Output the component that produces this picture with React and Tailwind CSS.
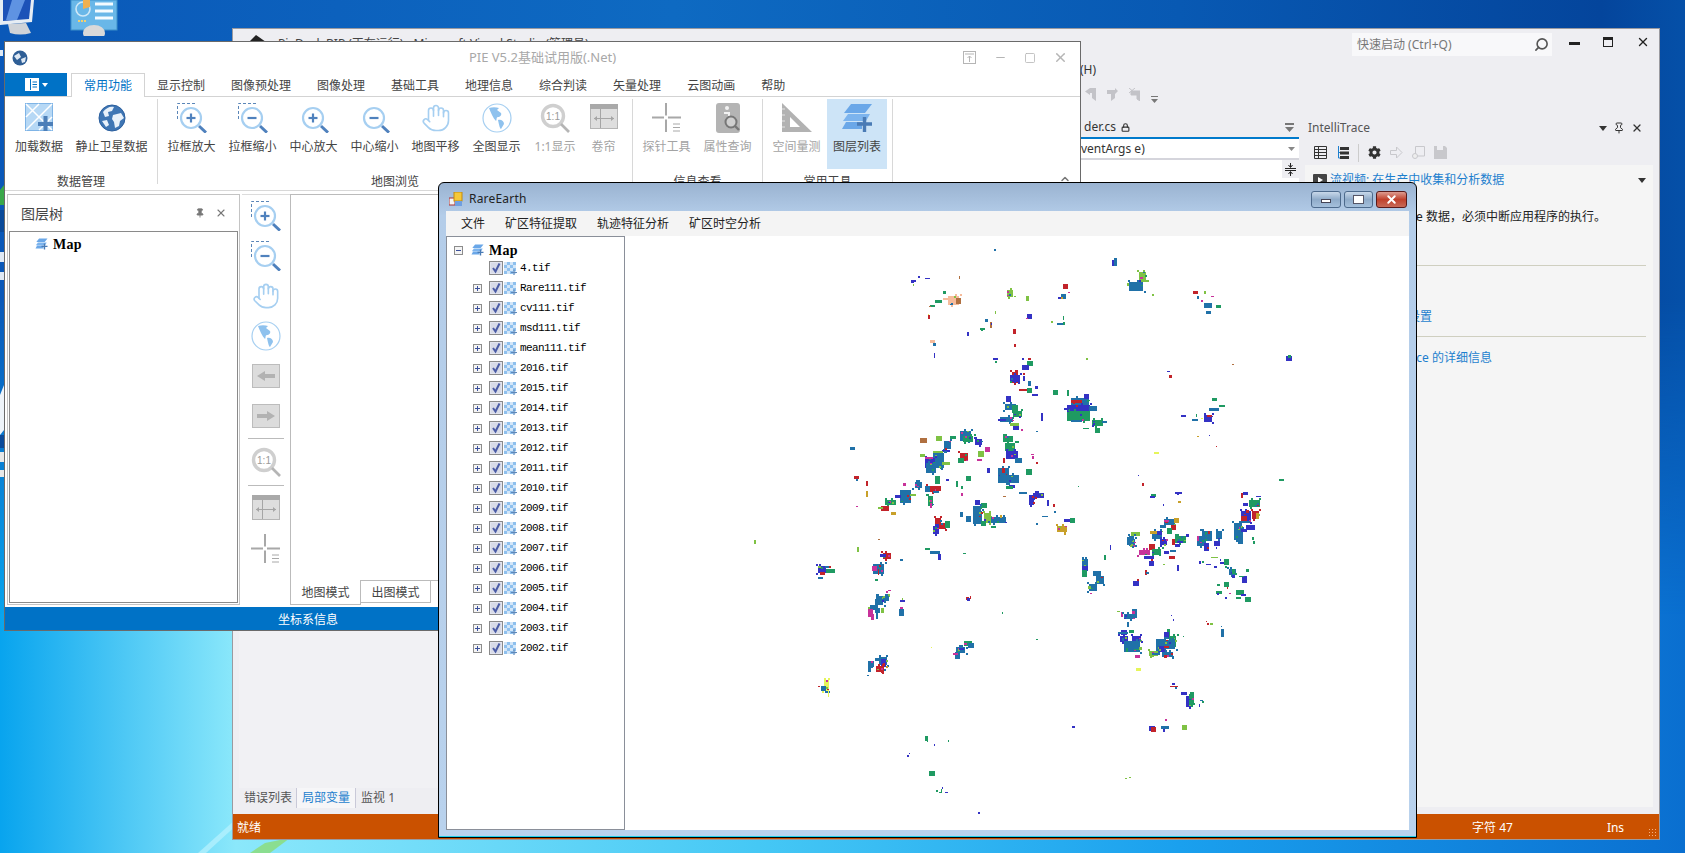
import React from 'react';
import { Hand, Search, X, Minus, Square, ChevronUp, Lock, Pin } from 'lucide-react';
import { FaCog } from 'react-icons/fa';

const CJK = "font-['Noto_Sans','Noto_Sans_CJK_SC',sans-serif]";

// map raster, traced from the picture as "colour x y w h" at 3x
const COLORS = {
  b: '#2071a8', i: '#3432c4', g: '#1f9a62', r: '#c2232a', m: '#c8329a',
  l: '#7fc244', y: '#c8a02a', p: '#f6bc9c', n: '#b07040', v: '#e6f55a',
};

const ZOOM_A = `b 432 57 6 6,i 785 90 12 15,b 790 85 8 20,l 865 128 18 25,l 830 160 12 8,b 835 158 38 22,m 868 142 8 4,l 885 150 8 6,l 903 192 4 6,
r 1026 184 10 8,l 1060 184 6 8,b 1040 200 6 8,b 1060 220 20 12,b 1065 244 10 8,g 1097 225 10 8,m 1052 212 6 6,m 1080 198 8 3,
i 183 150 8 8,i 205 138 5 5,i 225 144 10 3,i 192 150 5 4,n 327 140 3 8,l 190 162 3 4,g 280 184 8 8,p 295 198 30 22,n 318 205 10 14,p 280 205 15 6,g 255 210 18 8,g 240 225 10 4,n 238 230 6 3,r 236 255 6 9,v 236 252 3 3,
l 472 182 14 18,l 525 200 8 10,l 492 200 4 3,l 435 243 3 8,r 638 162 12 12,b 630 192 12 12,i 622 202 8 6,y 630 202 6 6,m 652 188 5 3,i 530 254 12 12,m 525 264 6 3,
b 405 267 8 8,n 422 278 6 14,i 424 280 3 6,g 390 295 12 4,g 395 299 4 6,i 353 306 6 9,l 600 273 6 6,g 636 258 3 9,b 618 280 20 6,g 636 278 6 8,r 490 298 8 10,r 492 342 6 8,p 240 330 12 8,b 250 340 8 8,i 252 370 3 10,
i 430 384 10 6,g 437 394 6 6,i 514 384 6 6,r 533 384 8 6,g 530 394 14 10,i 514 405 16 10,r 488 426 10 30,i 480 435 22 18,r 518 430 6 6,i 518 438 4 12,b 533 455 8 12,i 552 470 8 8,r 505 478 30 5,g 530 476 10 10,i 545 492 14 6,g 608 480 10 10,g 650 480 6 15,l 706 384 6 6,
b 660 505 50 20,i 650 525 65 22,g 650 545 65 25,r 660 512 30 8,i 700 492 10 12,b 715 530 20 12,i 640 535 10 5,b 660 570 30 6,g 725 570 30 15,g 732 595 12 10,g 697 594 14 3,b 755 575 10 6,
i 470 498 12 14,b 466 522 30 14,g 488 525 12 20,g 490 545 20 15,b 450 562 35 12,i 445 568 20 6,i 570 550 6 20,i 490 580 12 18,l 480 580 20 8,m 510 598 6 6,b 555 605 6 3,
b 330 605 30 25,g 340 620 25 15,i 375 628 18 14,n 210 625 18 10,l 258 620 14 10,g 300 618 15 8,b 282 635 16 20,i 278 660 20 6,l 250 664 25 6,b 250 670 28 40,i 225 685 25 25,m 225 683 20 6,b 228 700 25 25,l 276 696 20 8,l 210 672 12 8,r 330 670 20 20,g 325 685 15 10,l 385 665 15 15,m 405 652 12 12,m 382 688 10 5,
g 460 620 25 15,g 465 640 25 20,i 470 665 30 20,b 495 685 15 10,r 460 685 6 10,i 412 715 8 10,b 445 715 30 40,b 450 735 50 20,r 458 714 8 10,i 478 765 15 8,g 470 770 18 8,g 525 718 15 14,m 540 672 8 3,r 555 696 6 6,m 545 680 4 8,
b 0 652 12 8,r 12 738 10 8,b 20 748 6 4,r 48 755 6 12,y 48 785 6 14,m 20 828 6 3,b 195 758 18 14,m 160 760 8 8,b 150 780 30 35,i 135 795 15 8,g 105 810 30 10,r 95 830 20 12,l 85 832 10 6,y 125 848 10 8,l 180 792 15 6,r 230 768 25 15,b 225 770 10 15,g 255 740 12 20,r 260 770 12 12,b 250 785 14 6,g 235 800 10 25,m 240 820 6 10,i 288 748 8 5,g 318 755 4 15,g 350 740 10 12,g 335 770 6 8,m 335 790 6 8,
i 375 810 10 10,g 395 820 15 12,b 370 830 20 50,b 350 860 10 15,b 380 845 15 20,l 402 850 18 25,b 425 862 40 14,g 395 875 10 10,g 425 890 10 5,y 450 855 6 8,b 330 848 8 10,r 255 865 15 25,r 265 880 20 15,i 250 890 15 18,g 285 875 10 18,
b 505 786 20 5,i 535 795 10 25,i 550 790 25 12,i 590 810 6 15,r 608 822 6 8,b 610 845 6 6,b 575 860 14 3,i 640 868 15 8,g 658 865 10 10,y 620 888 25 15,b 555 880 6 6,n 460 798 8 3,
l 22 948 6 12,n 85 925 6 3,r 100 968 20 14,i 90 970 15 8,b 150 985 8 5,b 70 1000 30 25,m 68 1005 10 10,r 85 1015 3 15,g 75 1045 8 5,g 225 952 10 5,b 240 962 25 8,i 265 970 8 14,g 340 968 8 3,
i 1305 378 14 12,g 1312 375 8 8,n 1143 402 6 3,i 950 424 8 3,r 955 436 8 8,g 1085 505 10 8,g 1105 525 14 5,b 1075 535 25 8,i 1060 555 20 18,r 1068 555 12 6,i 990 555 10 6,b 1025 568 14 4,g 1035 552 3 8,v 1050 565 5 3,y 1038 618 6 3,i 1075 615 3 3,r 1095 648 3 3,v 910 668 10 4,i 862 735 3 3,r 873 760 3 8,g 1285 747 10 6,g 683 768 3 3`;

const ZOOM_B = `r 423 10 5 8,g 452 42 12 8,i 447 50 12 6,i 522 38 18 5,i 528 38 5 8,y 533 63 8 6,i 487 72 3 6,
b 490 118 30 14,r 510 135 12 10,b 478 135 15 8,g 500 145 12 10,y 520 116 10 10,b 455 155 25 18,y 448 155 20 6,i 470 155 10 8,m 490 120 10 6,g 522 165 28 18,r 515 175 8 15,i 530 180 15 6,i 555 160 8 8,i 478 175 18 15,i 522 190 10 8,
l 390 158 22 7,b 385 165 10 25,b 378 175 20 15,m 400 185 6 3,r 445 190 14 15,m 415 208 30 12,g 455 205 22 14,i 430 225 25 8,i 445 240 12 10,r 450 235 6 5,i 490 210 12 8,b 507 208 15 4,r 505 225 15 8,l 487 250 5 3,i 530 252 5 15,
b 605 155 25 22,b 590 165 22 25,m 590 165 6 12,i 610 188 10 20,b 645 155 15 18,i 640 180 15 10,r 618 200 6 6,i 645 200 3 6,
r 720 40 6 12,i 726 38 10 8,i 765 48 12 3,g 745 60 30 18,i 728 70 12 8,i 720 95 25 30,r 735 90 8 8,r 720 110 15 15,r 755 95 18 20,y 765 100 8 14,b 715 125 30 6,b 700 130 20 20,b 700 148 22 25,b 712 175 10 10,i 735 135 22 10,i 720 148 14 8,g 755 168 6 8,g 758 180 6 8,
b 245 235 15 20,i 245 255 15 10,g 245 268 10 18,b 278 272 20 10,b 285 285 20 20,b 265 310 20 16,l 262 315 8 8,m 268 336 6 3,i 396 302 15 12,r 410 295 6 6,r 432 268 4 10,b 436 275 8 6,g 310 222 6 10,i 327 192 3 10,
l 630 230 18 3,i 595 242 6 8,g 605 240 6 4,i 615 250 12 3,i 657 235 3 6,i 657 243 10 6,g 670 235 10 15,g 672 255 6 6,i 640 255 8 6,b 685 265 18 15,g 693 265 8 10,g 735 265 8 8,i 695 282 8 8,i 725 285 10 18,g 715 285 12 3,g 650 310 8 6,g 670 305 10 12,r 680 318 3 6,g 645 330 14 8,i 650 338 6 6,g 705 328 20 12,i 720 340 12 6,g 732 348 14 12,i 672 350 6 6,g 705 350 10 6,m 685 336 6 3,
l 350 390 8 3,m 360 395 6 12,b 370 400 25 12,b 395 385 10 22,m 393 392 8 8,b 378 425 6 10,i 360 447 15 12,g 385 447 10 8,b 352 455 25 4,i 358 465 20 15,i 395 465 22 12,b 370 480 45 30,g 400 505 15 3,l 415 500 8 8,m 402 522 10 8,v 405 562 10 8,
g 500 445 8 25,i 490 455 12 14,g 505 465 17 30,b 465 475 25 35,i 475 495 15 14,b 490 478 30 22,r 490 497 10 6,l 445 510 22 12,b 455 518 20 5,b 485 515 28 12,r 490 522 8 8,b 510 525 8 3,
i 513 606 8 6,r 507 615 20 3,b 522 618 6 6,i 540 635 15 8,i 555 645 12 28,g 565 640 10 30,g 575 668 8 6,b 598 657 8 3,g 605 660 4 6,i 594 670 3 8,
i 213 735 8 6,i 445 735 15 12,r 452 740 12 12,b 480 735 20 8,i 487 745 6 8,m 492 714 6 6,l 543 732 10 10,l 372 893 6 3,l 385 890 6 3,g 6 393 3 6,g 105 474 6 3,i 510 402 3 3,i 518 414 3 6,g 548 465 3 3,r 615 420 3 3,r 618 426 6 6,l 628 426 8 6,b 660 435 3 3,b 660 445 8 20`;

const ZOOM_C = `l 192 117 6 9,i 384 195 20 18,l 384 195 8 6,b 405 195 12 5,r 417 195 6 6,g 410 204 22 9,r 390 213 12 8,b 384 228 10 6,r 384 555 6 3,v 402 537 10 30,b 393 555 12 10,b 405 570 10 6,v 414 570 3 15,
m 595 268 8 3,m 590 270 6 6,l 585 280 10 8,b 560 285 35 12,b 555 295 20 15,b 560 280 8 8,b 540 312 20 10,b 555 322 12 10,m 535 325 10 20,m 545 340 8 14,b 560 338 6 14,l 573 323 8 10,l 535 318 6 6,i 630 298 12 5,l 636 291 3 6,b 627 325 12 18,m 630 320 8 4,
r 828 288 8 8,i 833 292 8 8,r 840 285 3 8,g 936 333 3 6,g 822 420 20 10,m 822 428 8 6,b 835 428 14 10,b 798 440 22 15,b 797 455 12 16,m 790 457 10 5,i 808 442 10 6,b 828 440 6 6,
b 534 480 15 15,b 540 495 8 6,b 534 500 8 12,b 555 472 12 8,b 567 468 20 20,i 575 475 12 20,r 560 495 20 15,r 580 488 6 8,y 588 495 6 6,b 533 522 6 3,b 582 505 6 6,m 545 480 6 5,v 723 438 3 3,
g 705 705 8 12,g 711 715 3 8,i 732 729 3 6,g 774 717 3 6,i 651 762 6 6,i 657 758 3 3,g 717 812 15 10,g 738 867 6 6,g 747 873 8 3,g 753 865 3 8,i 756 858 3 6,i 765 873 8 3,i 865 933 6 6`;

function buildRaster() {
  let seed = 7331;
  const rnd = (n) => {
    seed = (seed * 1103515245 + 12345) & 0x7fffffff;
    return (seed >> 8) % n;
  };
  const out = [];
  const keys = 'biglmr';
  const add = (str, ox, oy) => {
    str.split(',').forEach((e) => {
      const [c, x, y, w, h] = e.trim().split(' ');
      const sx = Math.floor(ox + x / 3), sy = Math.floor(oy + y / 3);
      const sw = Math.ceil(w / 3) + (w >= 9 ? 1 : 0), sh = Math.ceil(h / 3) + (h >= 9 ? 1 : 0);
      out.push([COLORS[c], sx, sy, sw, sh]);
      // break big blobs up so they read as raster cells
      if (w * h >= 250) {
        for (let k = 0; k < 3; k++) {
          const px = sx + rnd(sw);
          const py = sy + rnd(sh);
          const pick = COLORS[keys[rnd(6)]];
          out.push([pick, px, py, 2, k % 2 ? 1 : 2]);
        }
        for (let k = 0; k < 3; k++) {
          out.push([COLORS[c], sx - 2 + rnd(sw + 4), sy - 2 + (k % 2 ? sh + 2 : 0), 2, 2]);
        }
      }
    });
  };
  add(ZOOM_A, 850, 230);
  add(ZOOM_B, 1000, 480);
  add(ZOOM_C, 690, 500);
  return out;
}
const RASTER = buildRaster();

const FILE_ROWS = ['4.tif', 'Rare111.tif', 'cv111.tif', 'msd111.tif', 'mean111.tif', '2016.tif', '2015.tif', '2014.tif', '2013.tif', '2012.tif', '2011.tif', '2010.tif', '2009.tif', '2008.tif', '2007.tif', '2006.tif', '2005.tif', '2004.tif', '2003.tif', '2002.tif'];
const RIBBON_TABS = ['显示控制', '图像预处理', '图像处理', '基础工具', '地理信息', '综合判读', '矢量处理', '云图动画', '帮助'];

// ---- icons ----
const ZoomIcon = ({ sign, dashed }) => (
  <svg width="30" height="30" viewBox="0 0 30 30">
    {dashed && <path d="M0.5 16V0.5H20" fill="none" stroke="#5b86b8" strokeDasharray="3 2" />}
    <circle cx="14" cy="15" r="10" fill="#fff" stroke="#a6cff1" strokeWidth="2.2" />
    <path d="M9.5 15H18.5" stroke="#4f81bd" strokeWidth="2.2" />
    {sign === '+' && <path d="M14 10.5V19.5" stroke="#4f81bd" strokeWidth="2.2" />}
    <path d="M22 23L29 29.5" stroke="#4f81bd" strokeWidth="3" />
  </svg>
);

const PaleGlobe = () => (
  <svg width="30" height="30" viewBox="0 0 30 30">
    <circle cx="15" cy="15" r="14" fill="#fff" stroke="#a6cff1" strokeWidth="1.2" />
    <path d="M7 5C10 4 14 4 17 5L15 7L19 10C20 12 18 14 16 14C14 14 15 17 14 18C11 15 9 10 7 5Z" fill="#8fc2ee" />
    <path d="M16 17C19 16 22 18 22 21L19 26C18 26 17 22 16 17Z" fill="#8fc2ee" />
  </svg>
);

const DarkGlobe = () => (
  <svg width="28" height="28" viewBox="0 0 28 28">
    <circle cx="14" cy="14" r="13" fill="#3f76b4" />
    <path d="M5 8C8 4 12 2 16 3L14 7L10 8L11 12L7 13Z" fill="#e8f1fa" />
    <path d="M15 11L23 9L26 14L22 17L21 22L17 24L16 18L14 15Z" fill="#e8f1fa" />
    <path d="M4 17L9 16L11 21L8 23Z" fill="#e8f1fa" />
    <circle cx="14" cy="14" r="13" fill="none" stroke="#2b5f9e" />
  </svg>
);

const LoadData = () => (
  <svg width="29" height="30" viewBox="0 0 29 30">
    <rect x="0.5" y="0.5" width="27" height="27" fill="#b6d8f5" stroke="#7fb4e6" />
    <path d="M1 1L27 27M27 1L1 27M1 14L14 1M14 27L27 14" stroke="#fff" strokeWidth="1.5" />
    <path d="M13 21H28M20.5 13V28" stroke="#4d7fb8" strokeWidth="4" />
  </svg>
);

const OneToOne = ({ size = 30 }) => (
  <svg width={size} height={size} viewBox="0 0 30 30">
    <circle cx="13" cy="13" r="10.5" fill="#fff" stroke="#cfcfcf" strokeWidth="3.4" />
    <text x="13" y="17" textAnchor="middle" fontSize="10" fill="#9a9a9a" fontFamily="Liberation Sans">1:1</text>
    <path d="M21 21L29 29" stroke="#b5b5b5" strokeWidth="2.6" />
  </svg>
);

const Curtain = () => (
  <svg width="28" height="28" viewBox="0 0 28 28">
    <rect x="0.5" y="0.5" width="27" height="24" fill="#dedede" stroke="#b5b5b5" />
    <rect x="0" y="0" width="28" height="5" fill="#a9a9a9" />
    <path d="M10.5 5V24M4 14.5H24" stroke="#a5a5a5" />
    <path d="M4 14.5L7 12V17ZM24 14.5L21 12V17Z" fill="#a5a5a5" />
  </svg>
);

const Probe = () => (
  <svg width="30" height="30" viewBox="0 0 30 30">
    <path d="M14 0V29M0 14.5H29" stroke="#a8a8a8" strokeWidth="2" />
    <path d="M12 12.5H16V16.5H12Z" fill="#fff" />
    <path d="M21 21H28M21 24.5H28M21 28H28" stroke="#a8a8a8" />
  </svg>
);

const AttrQuery = () => (
  <svg width="24" height="30" viewBox="0 0 24 30">
    <rect width="24" height="30" rx="3" fill="#b4b4b4" />
    <circle cx="11" cy="5" r="2" fill="#f2f2f2" />
    <path d="M8 10H13V13" fill="none" stroke="#f2f2f2" strokeWidth="2" />
    <circle cx="15" cy="19" r="5.5" fill="#cfcfcf" stroke="#777" strokeWidth="2" />
    <path d="M19 23L23 27" stroke="#777" strokeWidth="2.4" />
  </svg>
);

const RulerTri = () => (
  <svg width="30" height="30" viewBox="0 0 30 30">
    <path d="M0 0L30 29H0Z" fill="#b2b2b2" />
    <path d="M8 14L18 24H8Z" fill="#fff" />
    <path d="M0 6H3M0 12H3M0 18H3M0 24H3" stroke="#e4e4e4" />
  </svg>
);

const LayersPlus = ({ w = 30, h = 30 }) => (
  <svg width={w} height={h} viewBox="0 0 30 30">
    <path d="M9 1H30L23 10H2Z" fill="#6aa7e8" />
    <path d="M6 11H28L24 18H1Z" fill="#7cb4ee" />
    <path d="M4 19H20V26H0Z" fill="#6aa7e8" />
    <path d="M15 21H30M22.5 14V29" stroke="#4a7bb5" strokeWidth="3.4" />
  </svg>
);

const ArrowBox = ({ right }) => (
  <svg width="28" height="24" viewBox="0 0 28 24">
    <rect x="0.5" y="0.5" width="27" height="23" fill="#dcdcdc" stroke="#bcbcbc" />
    {right ? <path d="M5 10H15V7L23 12L15 17V14H5Z" fill="#b2b2b2" /> : <path d="M23 10H13V7L5 12L13 17V14H23Z" fill="#b2b2b2" />}
  </svg>
);

const CheckMark = () => (
  <svg width="14" height="14" viewBox="0 0 14 14" className="shrink-0">
    <rect x="0.5" y="0.5" width="13" height="13" fill="#e3e5ef" stroke="#8a8a8a" />
    <rect x="2" y="2" width="10" height="10" fill="#d8dbe8" />
    <path d="M4 7L6.5 10.5L10.5 2.5" fill="none" stroke="#4c5ca6" strokeWidth="2" />
  </svg>
);

const RasterIcon = () => (
  <svg width="13" height="14" viewBox="0 0 13 14" className="shrink-0">
    {[0, 1, 2, 3].map((r) => [0, 1, 2, 3].map((c) => (
      <rect key={r + '-' + c} x={c * 3} y={r * 3 + 1} width="3" height="3" fill={(r + c) % 2 ? '#8ec0ee' : '#d3e6f8'} />
    )))}
    <path d="M7 11.5H13M10 8.5V14" stroke="#5d88ba" strokeWidth="1.2" />
  </svg>
);

const Expander = ({ open }) => (
  <svg width="9" height="9" viewBox="0 0 9 9" className="shrink-0">
    <rect x="0.5" y="0.5" width="8" height="8" fill="#f4f4f4" stroke="#8c8c8c" />
    <path d="M2 4.5H7" stroke="#3a4f9a" />
    {!open && <path d="M4.5 2V7" stroke="#3a4f9a" />}
  </svg>
);

const Tiny = ({ w, h, children, className = '' }) => (
  <svg width={w} height={h} viewBox={`0 0 ${w} ${h}`} className={'shrink-0 ' + className}>{children}</svg>
);

// ---- ribbon ----
const RibbonBtn = ({ w = 61, label, on, off, active, children }) => (
  <div style={{ width: w }} className={'flex flex-col items-center h-[70px] pt-[4px] shrink-0 ' + (active ? 'bg-[#cde4f7]' : '')}>
    <div className="h-[30px] flex items-center justify-center">{children}</div>
    <div className={'mt-[7px] text-[12px] leading-[14px] whitespace-nowrap ' + (off ? 'text-[#a3a3a3]' : 'text-[#444]')}>{label}</div>
  </div>
);

const RibbonGroup = ({ label, pad, children }) => (
  <div className={'relative h-[85px] border-r border-[#d8d8d8] shrink-0 ' + pad}>
    <div className="flex">{children}</div>
    <div className="absolute left-0 right-0 top-[76px] text-center text-[12px] leading-[14px] text-[#444]">{label}</div>
  </div>
);

function PieWindow() {
  return (
    <div className={'absolute left-[4px] top-[41px] w-[1077px] h-[590px] bg-white border border-[#6a6a6a] flex flex-col ' + CJK}>
      {/* title bar */}
      <div className="relative h-[31px] flex items-center justify-center shrink-0">
        <div className="absolute left-[7px] top-[8px]">
          <Tiny w={16} h={16}>
            <circle cx="8" cy="8" r="7.5" fill="#2f5f96" />
            <path d="M2 6L7 3L9 7L5 10ZM9 9L14 7L13 12L10 13Z" fill="#dfe9f4" />
          </Tiny>
        </div>
        <span className="text-[13px] text-[#a8a8a8]">PIE V5.2基础试用版(.Net)</span>
        <div className="absolute right-[12px] top-[8px] flex items-center gap-[17px] text-[#b5b5b5]">
          <Tiny w={14} h={14}>
            <rect x="0.5" y="0.5" width="12" height="12" fill="none" stroke="#b5b5b5" />
            <path d="M2 3H11M6.5 11V5M4.5 7L6.5 5L8.5 7" fill="none" stroke="#b5b5b5" />
          </Tiny>
          <Minus size={13} strokeWidth={2.2} />
          <Square size={12} strokeWidth={1.6} />
          <X size={15} strokeWidth={2.4} />
        </div>
      </div>

      {/* tab row */}
      <div className="h-[24px] flex border-b border-[#d3d3d3] shrink-0 relative">
        <div className="w-[62px] h-[23px] bg-[#0072c6] flex items-center justify-center gap-[3px]">
          <Tiny w={14} h={13}>
            <rect x="0.5" y="0.5" width="13" height="12" fill="#fff" stroke="#fff" />
            <path d="M5.5 1V12" stroke="#0072c6" />
            <path d="M7.5 4H12M7.5 6.5H12M7.5 9H12" stroke="#0072c6" />
          </Tiny>
          <Tiny w={6} h={4}><path d="M0 0H6L3 4Z" fill="#fff" /></Tiny>
        </div>
        <div className="ml-[4px] h-[24px] px-[12px] bg-white border border-b-0 border-[#d3d3d3] text-[12px] leading-[24px] text-[#0072c6]">常用功能</div>
        <div className="flex -ml-px">
          {RIBBON_TABS.map((t) => (
            <div key={t} className="px-[13px] text-[12px] leading-[25px] text-[#444] whitespace-nowrap">{t}</div>
          ))}
        </div>
      </div>

      {/* ribbon */}
      <div className="h-[94px] pt-[2px] flex relative shrink-0 border-b border-[#d8d8d8]">
        <RibbonGroup label="数据管理" pad="w-[153px] pl-[4px]">
          <RibbonBtn w={60} label="加载数据"><LoadData /></RibbonBtn>
          <RibbonBtn w={85} label="静止卫星数据"><DarkGlobe /></RibbonBtn>
        </RibbonGroup>
        <RibbonGroup label="地图浏览" pad="w-[475px] pl-[3px]">
          <RibbonBtn label="拉框放大"><ZoomIcon sign="+" dashed /></RibbonBtn>
          <RibbonBtn label="拉框缩小"><ZoomIcon sign="-" dashed /></RibbonBtn>
          <RibbonBtn label="中心放大"><ZoomIcon sign="+" /></RibbonBtn>
          <RibbonBtn label="中心缩小"><ZoomIcon sign="-" /></RibbonBtn>
          <RibbonBtn label="地图平移"><Hand size={30} strokeWidth={1.3} color="#a6cff1" /></RibbonBtn>
          <RibbonBtn label="全图显示"><PaleGlobe /></RibbonBtn>
          <RibbonBtn w={56} off label="1:1显示"><OneToOne /></RibbonBtn>
          <RibbonBtn w={41} off label="卷帘"><Curtain /></RibbonBtn>
        </RibbonGroup>
        <RibbonGroup label="信息查看" pad="w-[130px] pl-[3px]">
          <RibbonBtn off label="探针工具"><Probe /></RibbonBtn>
          <RibbonBtn off label="属性查询"><AttrQuery /></RibbonBtn>
        </RibbonGroup>
        <RibbonGroup label="常用工具" pad="w-[130px] pl-[3px]">
          <RibbonBtn off label="空间量测"><RulerTri /></RibbonBtn>
          <RibbonBtn w={60} active label="图层列表"><LayersPlus /></RibbonBtn>
        </RibbonGroup>
        <ChevronUp size={12} strokeWidth={3} color="#777" className="absolute right-[9px] top-[76px]" />
      </div>

      {/* body */}
      <div className="flex-1 flex min-h-0 pt-[3px] pl-[2px]">
        {/* layer tree pane */}
        <div className="w-[233px] h-[411px] border border-[#c4c4c4] p-px flex flex-col shrink-0">
          <div className="h-[35px] flex items-center pl-[12px] pr-[11px] pb-px shrink-0">
            <span className="text-[14px] text-[#444]">图层树</span>
            <Pin size={10} fill="#777" color="#777" className="ml-auto" />
            <X size={12} strokeWidth={2.2} color="#777" className="ml-[10px]" />
          </div>
          <div className="flex-1 border border-[#8a8a8a] pt-[2px] pl-[25px]">
            <div className="flex items-center gap-[5px] h-[20px]">
              <LayersPlus w={13} h={12} />
              <span className="font-['Liberation_Serif',serif] font-bold text-[14px] tracking-[0.3px] text-black">Map</span>
            </div>
          </div>
        </div>
        {/* vertical toolbar */}
        <div className="w-[48px] ml-[2px] border-t border-[#dcdcdc] pt-[1px] flex flex-col items-center shrink-0">
          {[<ZoomIcon sign="+" dashed />, <ZoomIcon sign="-" dashed />, <Hand size={28} strokeWidth={1.4} color="#a6cff1" />, <PaleGlobe />, <ArrowBox />, <ArrowBox right />].map((ic, i) => (
            <div key={i} className="h-10 flex items-center justify-center">{ic}</div>
          ))}
          <div className="w-9 h-px bg-[#bbb] mt-[2px]" />
          <div className="h-10 mt-[3px] flex items-center justify-center"><OneToOne /></div>
          <div className="w-9 h-px bg-[#bbb] mt-[3px]" />
          <div className="h-10 mt-[3px] flex items-center justify-center"><Curtain /></div>
          <div className="h-10 flex items-center justify-center"><Probe /></div>
        </div>
        {/* map view */}
        <div className="flex-1 h-[411px] flex flex-col border-t border-[#bbb]">
          <div className="flex-1 border-l border-[#bbb]" />
          <div className="h-[25px] flex shrink-0">
            <div className="w-[71px] h-[25px] border-l border-r border-b border-[#bbb] text-[12px] leading-[25px] text-center text-[#444]">地图模式</div>
            <div className="w-[70px] h-[23px] border-t border-r border-b border-[#bbb] text-[12px] leading-[23px] text-center text-[#444]">出图模式</div>
            <div className="flex-1 border-t border-[#bbb]" />
          </div>
        </div>
      </div>

      {/* status */}
      <div className="h-[23px] bg-[#0072c6] text-white text-[12px] leading-[26px] pl-[273px] shrink-0">坐标系信息</div>
    </div>
  );
}

function RareEarthWindow() {
  return (
    <div className="absolute left-[438px] top-[182px] w-[979px] h-[656px] rounded-t-[6px] border border-black bg-[linear-gradient(to_bottom,#9ab3d1_0,#b4cde9_5%,#b9d2ed_100%)] flex flex-col">
      <div className="h-[28px] flex items-center pl-[10px] pr-[9px] pt-[4px] shrink-0">
        <Tiny w={14} h={14}>
          <rect x="0" y="6" width="6" height="7" fill="#f4f4f4" stroke="#a33" />
          <rect x="5" y="0" width="8" height="9" fill="#f5c838" stroke="#c08a10" />
          <rect x="6" y="9" width="7" height="5" fill="#6f9fe0" />
        </Tiny>
        <span className="ml-[6px] text-[12px] text-[#222] tracking-[0.2px] font-['Noto_Sans',sans-serif]">RareEarth</span>
        <div className="ml-auto flex gap-[3px]">
          <div className="w-[30px] h-[17px] rounded-[3px] border border-[#4d6a8c] bg-[linear-gradient(to_bottom,#c8d8ea,#8fabc9_50%,#a5c0dc)] flex items-center justify-center">
            <div className="w-[10px] h-[4px] bg-white border border-[#445] mt-[3px]" />
          </div>
          <div className="w-[29px] h-[17px] rounded-[3px] border border-[#4d6a8c] bg-[linear-gradient(to_bottom,#c8d8ea,#8fabc9_50%,#a5c0dc)] flex items-center justify-center">
            <div className="w-[11px] h-[9px] bg-white border border-[#556]" />
          </div>
          <div className="w-[31px] h-[17px] rounded-[3px] border border-[#5a1a1a] bg-[linear-gradient(to_bottom,#dd9c90,#c0412c_50%,#c86a58)] flex items-center justify-center">
            <X size={13} strokeWidth={3.6} color="#fff" />
          </div>
        </div>
      </div>
      <div className="flex-1 mx-[7px] bg-white flex flex-col min-h-0">
        <div className={'h-[25px] bg-[#f4f4f4] flex items-center gap-[20px] pl-[15px] text-[12px] text-[#222] shrink-0 ' + CJK}>
          <span>文件</span>
          <span>矿区特征提取</span>
          <span>轨迹特征分析</span>
          <span>矿区时空分析</span>
        </div>
        <div className="flex-1 flex min-h-0">
          <div className="w-[179px] border border-[#8a8f99] pt-[3px] shrink-0">
            <div className="flex items-center h-[20px] pl-[7px]">
              <Expander open />
              <span className="ml-[8px]"><LayersPlus w={13} h={12} /></span>
              <span className="ml-[5px] font-['Liberation_Serif',serif] font-bold text-[14px] tracking-[0.3px] text-black">Map</span>
            </div>
            <div className="-mt-[2px]">
              {FILE_ROWS.map((name, i) => (
                <div key={name} className="flex items-center h-5 pl-[26px]">
                  {i === 0 ? <span className="w-[9px] shrink-0" /> : <Expander />}
                  <span className="ml-[7px] flex items-center gap-[1px]"><CheckMark /><RasterIcon /></span>
                  <span className="ml-[3px] font-['Liberation_Mono',monospace] text-[11px] tracking-[-0.6px] text-black whitespace-pre">{name}</span>
                </div>
              ))}
            </div>
          </div>
          <div className="flex-1 min-w-0">
            <svg className="block w-full h-full" viewBox="625 236 783 593" preserveAspectRatio="none" shapeRendering="crispEdges">
              {RASTER.map((r, i) => <rect key={i} x={r[1]} y={r[2]} width={r[3]} height={r[4]} fill={r[0]} />)}
            </svg>
          </div>
        </div>
      </div>
      <div className="h-[7px] shrink-0 border-b border-[#22d0e8]" />
    </div>
  );
}

function VsWindow() {
  return (
    <div className={'absolute left-[232px] top-[28px] w-[1428px] h-[812px] bg-[#eeeef2] border border-[#9a9aa0] flex flex-col ' + CJK}>
      {/* caption */}
      <div className="h-[31px] flex shrink-0 relative">
        <div className="pl-[13px] pt-[6px] flex items-start gap-[12px] text-[12px] text-[#444]">
          <Tiny w={20} h={14}><path d="M0 10L10 0L20 7V14H4Z" fill="#222" /></Tiny>
          <span className="whitespace-nowrap">PieDesk.BIP (正在运行) - Microsoft Visual Studio (管理员)</span>
        </div>
        <div className="ml-auto flex items-start pt-[4px] pr-[9px]">
          <div className="w-[200px] h-[23px] bg-[#f8f8fa] flex items-center pl-[5px] pr-[3px] text-[12px] text-[#777]">
            <span>快速启动 (Ctrl+Q)</span>
            <Search size={15} strokeWidth={2.6} color="#555" className="ml-auto -scale-x-100" />
          </div>
          <div className="ml-[17px] w-[11px] mt-[9px] h-[3px] bg-[#222]" />
          <div className="ml-[23px] mt-[4px] w-[10px] h-[10px] border border-t-[3px] border-[#222]" />
          <X size={14} strokeWidth={2.4} color="#222" className="ml-[23px] mt-[2px]" />
        </div>
      </div>
      {/* menu row */}
      <div className="h-[20px] flex items-center pl-[847px] text-[12px] text-[#333] shrink-0">(H)</div>
      {/* toolbar row */}
      <div className="h-[32px] flex items-center pl-[852px] pb-[4px] gap-[11px] shrink-0">
        <Tiny w={11} h={13}><path d="M3 0H11V13L7 10V5H5V7L0 3.5L5 0Z" fill="#c3c3c8" /></Tiny>
        <Tiny w={11} h={13}><path d="M8 0V2H0V6H4V13L8 10V6L11 3Z" fill="#c3c3c8" /></Tiny>
        <Tiny w={11} h={13}><path d="M2 3H11V13L8 11V7H2ZM0 0L6 5M6 0L0 5" fill="#c3c3c8" stroke="#c3c3c8" /></Tiny>
        <Tiny w={7} h={7} className="mt-[10px]"><path d="M0 0H7V1H0ZM0 3H7L3.5 7Z" fill="#777" /></Tiny>
      </div>
      {/* main */}
      <div className="flex-1 flex min-h-0">
        <div className="w-[1066px] pl-[6px] flex flex-col shrink-0">
          <div className="h-[25px] flex items-end pb-[1px] pr-[5px] shrink-0">
            <span className="ml-[845px] text-[12px] text-[#333] leading-[18px]">der.cs</span>
            <Lock size={9} strokeWidth={3} color="#333" className="ml-[5px] mb-[4px]" />
            <Tiny w={9} h={9} className="ml-auto mb-[4px]"><path d="M0 0H9V2H0ZM0 4H9L4.5 9Z" fill="#777" /></Tiny>
          </div>
          <div className="h-[2px] bg-[#007acc] shrink-0" />
          <div className="h-[21px] bg-white border-b-2 border-[#d5d5dc] flex items-center justify-end pr-[4px] shrink-0">
            <span className="mr-auto ml-[842px] text-[12px] text-[#333] whitespace-nowrap">ventArgs e)</span>
            <Tiny w={7} h={4}><path d="M0 0H7L3.5 4Z" fill="#888" /></Tiny>
          </div>
          <div className="h-[470px] bg-white flex justify-end shrink-0">
            <div className="w-[17px] h-[18px] bg-[#eeeef2] flex items-center justify-center">
              <Tiny w={11} h={13}><path d="M5.5 0V4M0 5.5H11M0 7.5H11M5.5 9V13M3.5 2L5.5 4.5L7.5 2M3.5 11L5.5 8.5L7.5 11" fill="none" stroke="#222" /></Tiny>
            </div>
          </div>
          <div className="flex-1 bg-[#f1f1f4] min-h-0" />
          <div className="h-[20px] mb-[6px] flex items-center text-[12px] text-[#555] shrink-0">
            <span className="pl-[5px] pr-[4px] whitespace-nowrap">错误列表</span>
            <span className="px-[5px] border-l border-r border-[#c9c9d8] h-full leading-[20px] text-[#1d7fce] bg-[#f6f6f8] whitespace-nowrap">局部变量</span>
            <span className="pl-[5px] whitespace-nowrap">监视 1</span>
          </div>
        </div>
        <div className="flex-1 pl-[6px] pr-[6px] pb-[7px] flex flex-col min-w-0">
          <div className="h-[28px] flex items-center pt-[4px] pl-[3px] pr-[7px] shrink-0">
            <span className="text-[12px] text-[#555] whitespace-nowrap">IntelliTrace</span>
            <div className="ml-[8px] w-[211px] h-[5px] bg-[radial-gradient(#999_0.6px,transparent_0.6px)] bg-[length:2px_2px]" />
            <Tiny w={8} h={5} className="ml-[10px]"><path d="M0 0H8L4 5Z" fill="#333" /></Tiny>
            <Pin size={12} color="#333" className="ml-[6px]" />
            <X size={12} strokeWidth={2.6} color="#333" className="ml-[6px]" />
          </div>
          <div className="h-[25px] flex items-center pl-[9px] gap-[9px] shrink-0">
            <Tiny w={13} h={13}><path d="M0.5 0.5H12.5V12.5H0.5ZM0.5 3.5H12.5M0.5 6.5H12.5M0.5 9.5H12.5M4.5 0.5V12.5" fill="none" stroke="#333" /></Tiny>
            <Tiny w={13} h={13}><path d="M4 1H13V4H4ZM4 5.5H13V8.5H4ZM4 10H13V13H4Z" fill="#333" /><path d="M2.5 0V12H4M2.5 6.5H4" stroke="#1d7fce" fill="none" /></Tiny>
            <div className="w-px h-[18px] bg-[#ccc]" />
            <FaCog size={13} color="#333" />
            <Tiny w={13} h={13}><path d="M0.5 4.5H6.5V1L12 6.5L6.5 12V8.5H0.5Z" fill="none" stroke="#c8c8cc" /></Tiny>
            <Tiny w={13} h={13}><path d="M3.5 0.5H12.5V10H3.5Z" fill="none" stroke="#c8c8cc" /><circle cx="3" cy="10" r="2.5" fill="#eee" stroke="#c8c8cc" /></Tiny>
            <Tiny w={13} h={13}><path d="M0 0H11L13 2V13H0Z" fill="#c8c8cc" /><rect x="3" y="0" width="6" height="4" fill="#eeeef2" /></Tiny>
          </div>
          <div className="flex-1 bg-[#f5f5f5] flex flex-col min-h-0 pr-[7px] text-[12px]">
            <div className="h-[30px] flex items-center pl-[8px] pr-[0px] shrink-0">
              <Tiny w={14} h={12}><rect width="14" height="12" rx="1" fill="#444" /><path d="M5 3L10 6L5 9Z" fill="#fff" /></Tiny>
              <span className="ml-[3px] text-[#1d7fce] whitespace-nowrap">流视频: 在生产中收集和分析数据</span>
              <Tiny w={8} h={5} className="ml-auto"><path d="M0 0H8L4 5Z" fill="#333" /></Tiny>
            </div>
            <div className="h-[42px] pt-[2px] flex items-center justify-end pr-[40px] text-[#222] whitespace-nowrap shrink-0">若要查看 IntelliTrace 数据，必须中断应用程序的执行。</div>
            <div className="h-[28px] shrink-0" />
            <div className="h-px bg-[#cfcfc0] shrink-0" />
            <div className="h-[70px] flex items-end justify-end pb-[10px] pr-[214px] text-[#1d7fce] whitespace-nowrap shrink-0">打开 IntelliTrace 设置</div>
            <div className="h-px bg-[#cfcfc0] shrink-0" />
            <div className="h-[40px] pt-[2px] flex items-center justify-end pr-[154px] text-[#1d7fce] whitespace-nowrap shrink-0">了解有关 IntelliTrace 的详细信息</div>
          </div>
        </div>
      </div>
      {/* status bar */}
      <div className="h-[25px] pt-[2px] bg-[#ca5100] text-white text-[12px] flex items-center pl-[4px] shrink-0 relative">
        <span>就绪</span>
        <span className="ml-[1211px]">字符 47</span>
        <span className="ml-[94px]">Ins</span>
        <div className="absolute right-[3px] bottom-[3px] w-[8px] h-[8px] bg-[radial-gradient(#f5b080_0.7px,transparent_0.7px)] bg-[length:3px_3px]" />
      </div>
    </div>
  );
}

function DesktopIcons() {
  return (
    <>
      <svg className="absolute left-0 top-0" width="120" height="36" viewBox="0 0 120 36">
        {/* computer */}
        <path d="M0 0H34L32 22L0 25Z" fill="#e6edf4" />
        <path d="M3 0H31L29 19L3 21Z" fill="#1c52b8" />
        <path d="M12 0H25L17 20H6Z" fill="#5f93e2" />
        <path d="M8 24L26 23L31 33Q20 36 10 33Z" fill="#cfd3d8" />
        {/* control panel */}
        <rect x="71" y="0" width="46" height="30" fill="#69b7e8" stroke="#3c8fc9" />
        <circle cx="83" cy="9" r="7" fill="none" stroke="#cfe8f7" strokeWidth="1.6" />
        <path d="M83 0H90V7L83 9Z" fill="#f0b050" />
        <path d="M95 4H113M95 11H113M95 18H113" stroke="#f4fbff" strokeWidth="3" />
        <path d="M78 21H86" stroke="#f0d070" strokeWidth="2" strokeDasharray="2 1" />
        <ellipse cx="94" cy="33" rx="11" ry="8" fill="#d9d9d9" />
      </svg>
      <svg className="absolute left-0 top-[40px]" width="4" height="440" viewBox="0 0 4 440">
        <path d="M0 10H3V16H0Z" fill="#dfe9f4" />
        <path d="M0 150L4 145V165H0Z" fill="#3aa84a" />
        <path d="M0 170H4V192H0Z" fill="#0a4a9a" />
        <path d="M0 212H4V222H0ZM0 232H4V240H0Z" fill="#dfe9f4" />
        <path d="M0 355L4 345V390L0 395Z" fill="#eef4fa" />
        <path d="M0 395H4V408H0Z" fill="#0a4a9a" />
        <path d="M0 412H4V422H0ZM0 430H4V437H0Z" fill="#e8e8e8" />
      </svg>
    </>
  );
}

export default function App() {
  return (
    <div className="relative w-[1685px] h-[853px] overflow-hidden bg-[linear-gradient(to_right,#08a4ee_0%,#8be8fb_14%,#45c8f5_45%,#1aa0ee_70%,#0a6fd0_100%)]">
      <div className="absolute inset-0 bg-[linear-gradient(to_right,#0a58b8_0%,#0e6ac2_40%,#0859b3_70%,#04459c_95%,#0550a8_100%)] [mask-image:linear-gradient(to_bottom,black_35%,transparent_72%)]" />
      <DesktopIcons />
      <svg className="absolute left-[190px] top-[808px]" width="140" height="45" viewBox="0 0 140 45">
        <path d="M8 45L45 12L50 14L16 45Z" fill="#b9f2fd" opacity="0.7" />
        <path d="M60 45L75 35L100 30L80 45Z" fill="#8ed84a" opacity="0.6" />
      </svg>
      <VsWindow />
      <PieWindow />
      <RareEarthWindow />
    </div>
  );
}
